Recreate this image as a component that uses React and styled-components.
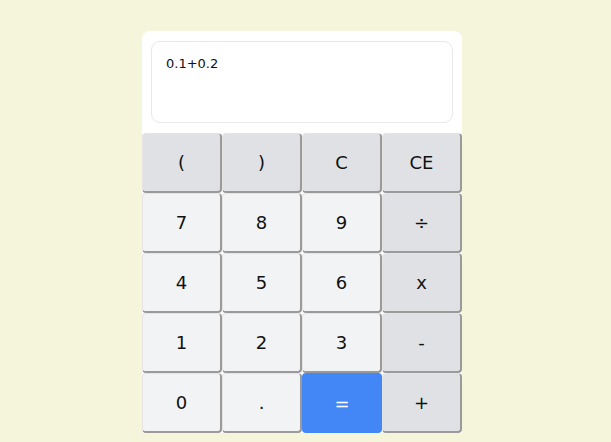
import styled, { createGlobalStyle } from "styled-components";

const GlobalStyle = createGlobalStyle`
  html, body {
    margin: 0;
    padding: 0;
    background: #f5f5dc;
    font-family: Tahoma, "DejaVu Sans", Verdana, sans-serif;
  }
`;

const Page = styled.div`
  padding: 31px 0 0 142px;
  height: 411px;
  overflow: hidden;
`;

const Card = styled.div`
  width: 320px;
  background: #ffffff;
  border-radius: 8px 8px 0 0;
  padding-top: 10px;
`;

const Display = styled.div`
  margin: 0 9px 10px 9px;
  height: 82px;
  border: 1px solid #e8e8e8;
  border-radius: 9px;
  padding: 14px 14px 0 14px;
  box-sizing: border-box;
  font-size: 13px;
  color: #111;
`;

const Keys = styled.div`
  display: grid;
  grid-template-columns: repeat(4, 80px);
  grid-auto-rows: 60px;
`;

const Key = styled.button`
  font-family: Tahoma, "DejaVu Sans", Verdana, sans-serif;
  font-size: 18px;
  color: ${({ $variant }) => ($variant === "equals" ? "#ffffff" : "#111")};
  background: ${({ $variant }) =>
    $variant === "equals" ? "#4287f5" : $variant === "op" ? "#e0e1e5" : "#f2f3f5"};
  border: 1px solid;
  border-color: ${({ $variant }) =>
    $variant === "equals"
      ? "#4287f5"
      : "#e4e4e4 #9a9a9a #9a9a9a #e4e4e4"};
  border-width: ${({ $variant }) => ($variant === "equals" ? "0" : "1px 2px 2px 1px")};
  border-radius: 4px;
  padding: 0;
  margin: 0;
  cursor: pointer;
`;

const keys = [
  ["(", "op"], [")", "op"], ["C", "op"], ["CE", "op"],
  ["7"], ["8"], ["9"], ["÷", "op"],
  ["4"], ["5"], ["6"], ["x", "op"],
  ["1"], ["2"], ["3"], ["-", "op"],
  ["0"], ["."], ["=", "equals"], ["+", "op"],
];

export default function App() {
  return (
    <>
      <GlobalStyle />
      <Page>
        <Card>
          <Display>0.1+0.2</Display>
          <Keys>
            {keys.map(([label, variant]) => (
              <Key key={label} $variant={variant}>
                {label}
              </Key>
            ))}
          </Keys>
        </Card>
      </Page>
    </>
  );
}
